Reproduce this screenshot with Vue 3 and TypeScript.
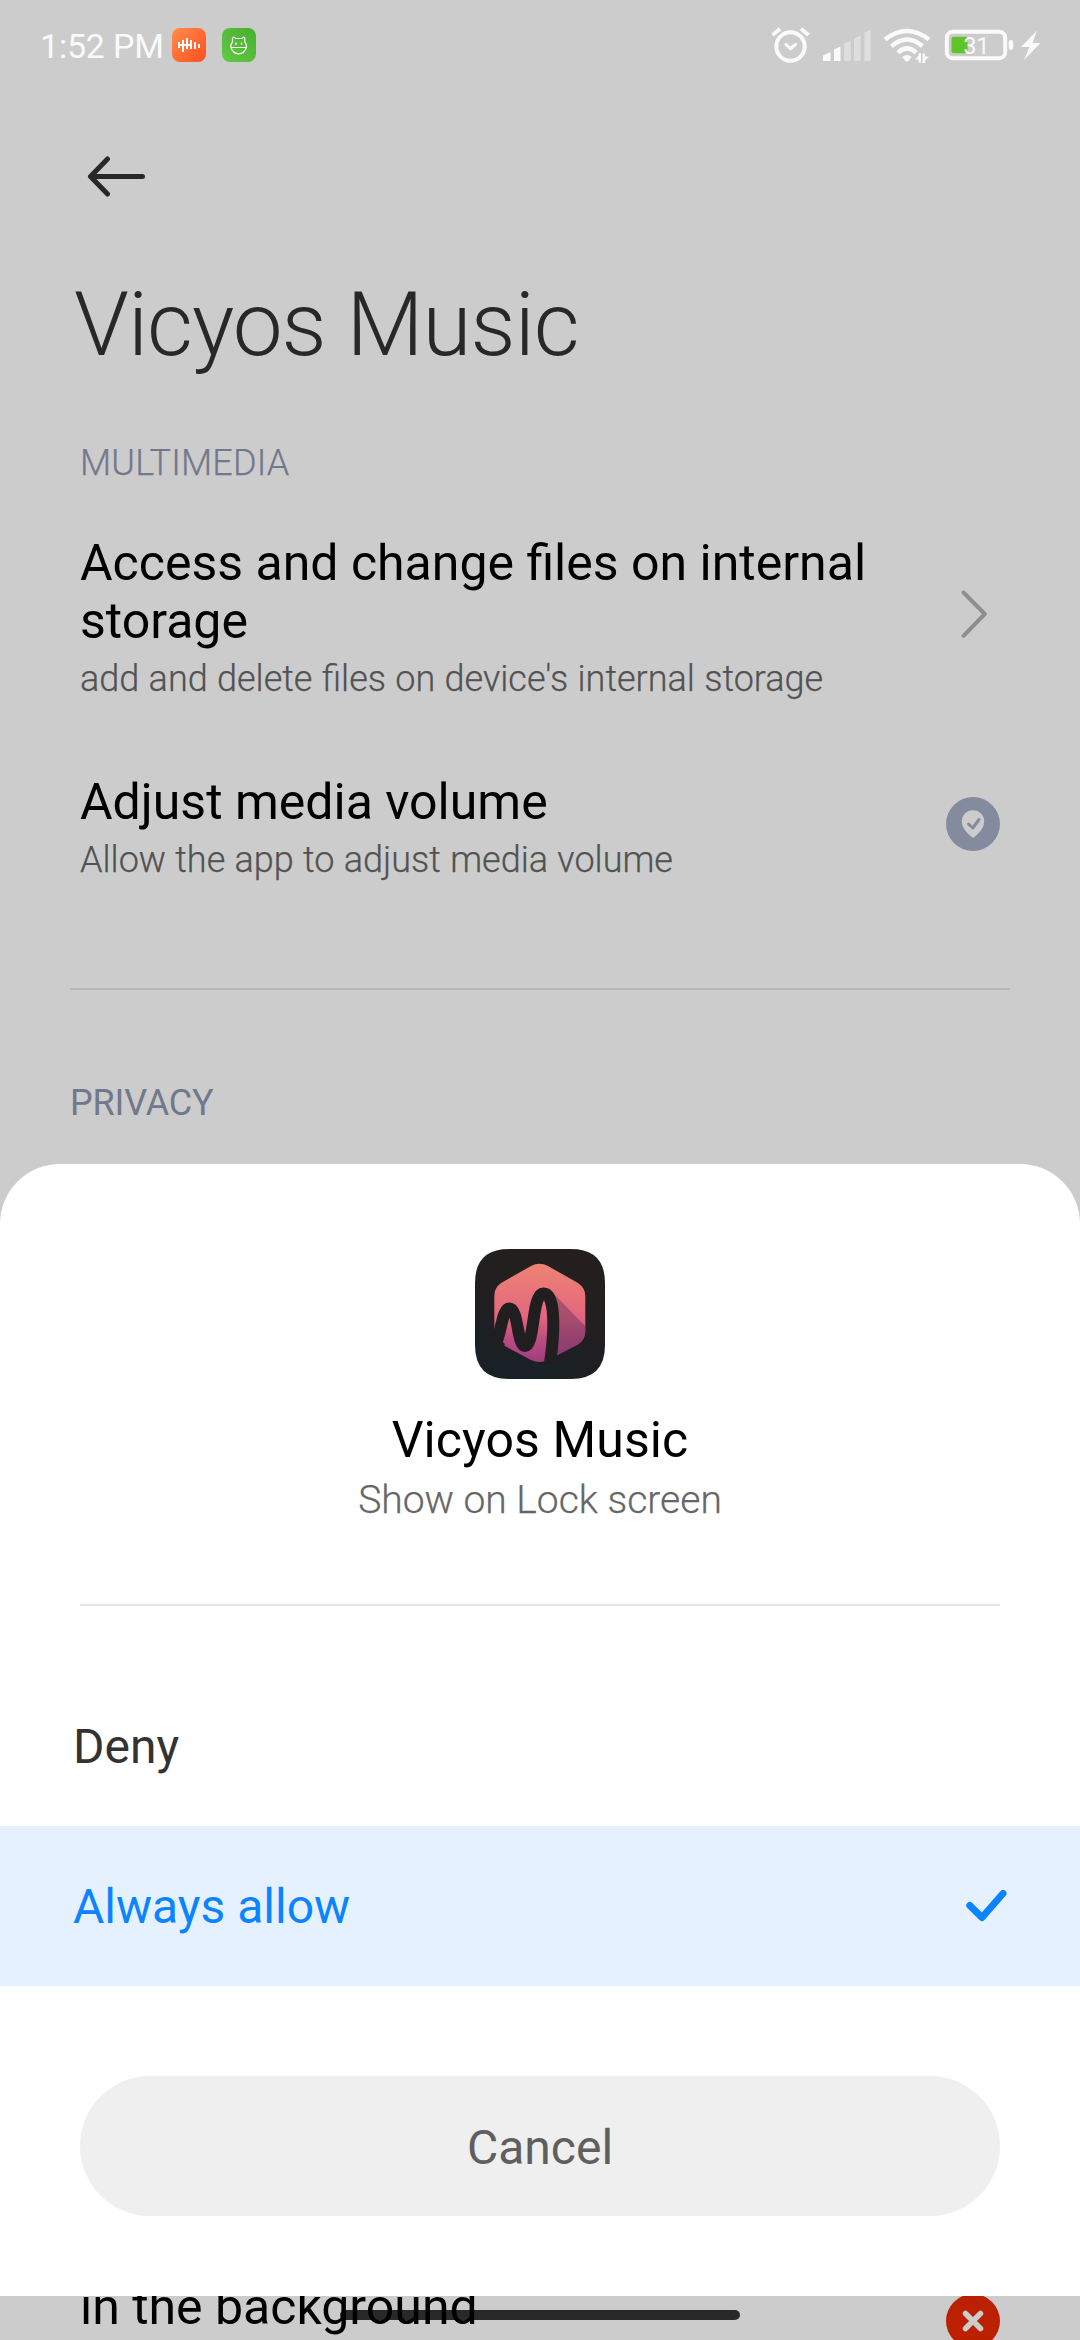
<script setup lang="ts">
interface Option {
  label: string
  selected: boolean
}

const options: Option[] = [
  { label: 'Deny', selected: false },
  { label: 'Always allow', selected: true },
]
</script>

<template>
  <div class="screen">
    <header class="status">
      <span class="time">1:52 PM</span>
      <svg class="app-badge" width="34" height="34" viewBox="0 0 34 34">
        <defs>
          <linearGradient id="orange" x1="0" y1="0" x2="1" y2="1">
            <stop offset="0" stop-color="#ff8d4c" />
            <stop offset="1" stop-color="#ff4e1c" />
          </linearGradient>
        </defs>
        <rect width="34" height="34" rx="8" fill="url(#orange)" />
        <path d="M7 14v6M11 12v12M15 10v11M19 12v9M23 14v7M27 16v4M7 17h12" fill="none" stroke="#fff" stroke-width="2" />
      </svg>
      <svg class="app-badge green" width="34" height="34" viewBox="0 0 34 34">
        <defs>
          <linearGradient id="green" x1="1" y1="0" x2="0" y2="1">
            <stop offset="0" stop-color="#46b02e" />
            <stop offset="1" stop-color="#63c944" />
          </linearGradient>
        </defs>
        <rect width="34" height="34" rx="8" fill="url(#green)" />
        <path d="M10.5 14 10.5 10.5Q11.5 7.500 13.500 10.500H20Q22 7.500 22.800 10.500V14Q24.500 15.500 24.500 19Q22.500 25.800 16.700 25.800Q11 25.800 8.800 19Q8.800 15.500 10.500 14ZM9 19.500H24.500M14 14.500v2.500M19.500 14.500v2.500" fill="none" stroke="#fff" stroke-width="1.200" />
      </svg>

      <svg class="status-icons" width="272" height="40" viewBox="769 25 272 40">
        <g fill="none" stroke="#fafafa" stroke-linecap="round" stroke-linejoin="round">
          <circle cx="790.5" cy="46.500" r="14.200" stroke-width="4" />
          <path d="m786 44.500 4.500 4.200 5-4.200" stroke-width="3.200" />
          <path d="m772.500 35 7.500-6.300M808.500 35l-7.500-6.300" stroke-width="3.800" stroke-linecap="butt" />
        </g>
        <g fill="#fafafa">
          <path d="M823 61V56.500q0-1 1-1.400L830.500 52V61H824Z" />
          <path d="M834 61V50.500q0-1 1-1.400L840.500 46.500V61H835Z" />
        </g>
        <g fill="#dedede">
          <path d="M844 61V44.500q0-1 1-1.400L850.700 41V61Z" />
          <path d="M854 61V39.500q0-1 1-1.400L860.500 35.500V61Z" />
          <path d="M864.500 61V33.500q0-1 1-1.400L870.700 30V61Z" />
        </g>
        <g fill="none" stroke="#fafafa" stroke-width="4.500">
          <path d="M885 39.500Q907 22.500 929 39.500" />
          <path d="M891.500 46.200Q907 32.800 922.500 46.200" />
          <path d="M897.800 52.700Q907 44 916.200 52.700" />
        </g>
        <path d="M902.300 57q4.700-4 9.400 0l-3.300 4q-1.400 1.300-2.800 0Z" fill="#fafafa" />
        <path d="M919.800 53.200v9.500M923.800 53.500v9.500" fill="none" stroke="#fafafa" stroke-width="2.400" />
        <path d="m915.200 59.500 5.500-6.500v6.500ZM928.800 56.500l-5.500 6.500v-6.500Z" fill="#fafafa" />
        <rect x="946.800" y="31.800" width="58.400" height="26.400" rx="6" fill="none" stroke="#fafafa" stroke-width="4" />
        <rect x="951.500" y="36.800" width="16" height="16.400" rx="2" fill="#60c428" />
        <rect x="1008.700" y="40" width="4.500" height="10" rx="2.200" fill="#fafafa" />
        <text x="963.500" y="53.500" class="battery">31</text>
        <path d="M1037 30.500 1021 47h8.500L1024 60 1040.500 43h-8Z" fill="#fafafa" />
      </svg>
    </header>

    <nav class="toolbar">
      <svg width="60" height="42" viewBox="0 0 60 42" fill="none" stroke="#282828" stroke-width="5" stroke-linecap="round" stroke-linejoin="round">
        <path d="M22.500 3 5.500 20.500 22.500 38M6.500 20.500H57.500" />
      </svg>
    </nav>

    <h1 class="page-title">Vicyos Music</h1>

    <h2 class="section multimedia">MULTIMEDIA</h2>
    <section class="item first">
      <div class="copy">
        <p class="item-title">Access and change files on internal storage</p>
        <p class="item-sub">add and delete files on device's internal storage</p>
      </div>
      <svg class="mark" width="54" height="54" viewBox="0 0 54 54" fill="none" stroke="#8e8e8e" stroke-width="4" stroke-linecap="round" stroke-linejoin="round">
        <path d="M17.500 5.500 38.800 27 17.500 48.800" />
      </svg>
    </section>
    <section class="item second">
      <div class="copy">
        <p class="item-title">Adjust media volume</p>
        <p class="item-sub">Allow the app to adjust media volume</p>
      </div>
      <svg class="mark" width="54" height="54" viewBox="0 0 54 54">
        <circle cx="27" cy="27" r="27" fill="#858b9e" />
        <path d="M27 41Q15.800 32.500 15.800 24.500A11.200 11.200 0 0 1 38.200 24.500Q38.200 32.500 27 41Z" fill="#ccc" />
        <path d="m22.500 27 4.300 4L33 22.500" fill="none" stroke="#858b9e" stroke-width="3" stroke-linecap="round" stroke-linejoin="round" />
      </svg>
    </section>
    <hr class="rule" />
    <h2 class="section privacy">PRIVACY</h2>

    <section class="item background">
      <p class="item-title">in the background</p>
      <svg class="denied" width="54" height="54" viewBox="0 0 54 54">
        <circle cx="27" cy="27" r="27" fill="#bb2000" />
        <path d="m19.500 19.500 15 15M34.500 19.500l-15 15" stroke="#ccc" stroke-width="5.500" stroke-linecap="round" />
      </svg>
    </section>

    <div class="sheet">
      <svg class="app-icon" width="130" height="130" viewBox="0 0 130 130">
        <defs>
          <linearGradient id="tile" x1="0.700" y1="0" x2="0.300" y2="1">
            <stop offset="0" stop-color="#241f1e" />
            <stop offset="0.500" stop-color="#211f20" />
            <stop offset="1" stop-color="#182126" />
          </linearGradient>
          <linearGradient id="hex" x1="0" y1="0" x2="0" y2="1">
            <stop offset="0" stop-color="#ee8572" />
            <stop offset="0.550" stop-color="#e3657f" />
            <stop offset="0.750" stop-color="#bb4c80" />
            <stop offset="1" stop-color="#9d3c80" />
          </linearGradient>
          <clipPath id="hexclip">
            <path d="M56 17Q64.500 12.500 73 17L103 34Q110.300 39 110.300 47V82Q110.300 91 103 95.500L73 111Q64.500 115 56 111L26 95Q19.300 91 19.300 82V47Q19.300 39 26 34Z" />
          </clipPath>
        </defs>
        <path d="M34 0H96Q130 0 130 34V96Q130 130 96 130H34Q0 130 0 96V34Q0 0 34 0Z" fill="url(#tile)" />
        <g clip-path="url(#hexclip)">
          <rect x="18" y="12" width="94" height="104" fill="url(#hex)" />
          <path d="M75 41 112 79V100L80 112Z" fill="#6b3560" fill-opacity="0.500" />
        </g>
        <path d="M20 97C27 82 27 59.500 34.500 59.500C43.500 59.500 42 97 50 97C60 97 56.500 44.500 68.500 44.500C81 44.500 79.500 84 75 114" fill="none" stroke="#211e1f" stroke-width="12" />
        <path d="M18 84 30 95 26 103 17 99Z" fill="#1d2022" />
      </svg>
      <p class="sheet-title">Vicyos Music</p>
      <p class="sheet-sub">Show on Lock screen</p>
      <hr class="sheet-rule" />
      <ul class="options">
        <li v-for="o in options" :key="o.label" :class="['option', { selected: o.selected }]">
          <span>{{ o.label }}</span>
          <svg v-if="o.selected" width="42" height="34" viewBox="0 0 42 34" fill="none" stroke="#0d84ff" stroke-width="7" stroke-linecap="round" stroke-linejoin="round">
            <path d="M4.800 15.500 17 27.500 38 3.500" />
          </svg>
        </li>
      </ul>
      <button class="cancel" type="button">Cancel</button>
    </div>
    <div class="home-handle"></div>
  </div>
</template>

<style>
body {
  margin: 0;
  background: #ccc;
}
</style>

<style scoped>
.screen {
  position: relative;
  box-sizing: border-box;
  width: 1080px;
  height: 2340px;
  overflow: hidden;
  background: #ccc;
  font-family: Roboto, 'Noto Sans', sans-serif;
  font-weight: 400;
  display: flex;
  flex-direction: column;
}
.screen * {
  flex-shrink: 0;
}
h1, h2, p, ul, hr {
  margin: 0;
  padding: 0;
  border: 0;
}
svg {
  display: block;
}
.status {
  display: flex;
  align-items: center;
  height: 90px;
  padding: 0 39px 0 40px;
}
.time {
  width: 132px;
  padding-top: 2px;
  font-size: 34px;
  line-height: 40px;
  letter-spacing: -0.2px;
  color: #fafafa;
  white-space: nowrap;
}
.green {
  margin-left: 16px;
}
.status-icons {
  margin-left: auto;
}
.battery {
  font-size: 23px;
  fill: #fafafa;
}
.toolbar {
  height: 107px;
  padding: 66px 0 0 85px;
  box-sizing: border-box;
}
.page-title {
  margin-top: 76px;
  padding-left: 74px;
  font-size: 89px;
  line-height: 104px;
  font-weight: 300;
  letter-spacing: -0.95px;
  color: #282828;
}
.section {
  font-size: 36px;
  line-height: 42px;
  font-weight: 400;
  color: #72788c;
}
.multimedia {
  margin-top: 65px;
  padding-left: 80px;
  font-weight: 300;
  letter-spacing: 0.18px;
  -webkit-text-stroke: 0.25px currentColor;
}
.item {
  display: flex;
  align-items: center;
  justify-content: space-between;
  padding: 0 80px;
}
.copy {
  width: 800px;
}
.first {
  margin-top: 50px;
}
.second {
  margin-top: 73px;
}
.mark {
  margin-bottom: 6px;
}
.item-title {
  font-size: 50px;
  line-height: 58px;
  color: #000;
}
.item-sub {
  margin-top: 8px;
  font-size: 36px;
  line-height: 42px;
  font-weight: 300;
  /* wide tracking would break the fi ligature, so the words are spread instead */
  word-spacing: 0.5px;
  -webkit-text-stroke: 0.25px currentColor;
  color: #525252;
}
.rule {
  height: 2px;
  margin: 107px 70px 0;
  background: #b7b7b7;
}
.privacy {
  margin-top: 92px;
  padding-left: 70px;
  letter-spacing: -0.15px;
}
.background {
  margin-top: 1154px;
  align-items: flex-start;
}
.denied {
  margin-top: 16px;
}
.sheet {
  position: absolute;
  left: 0;
  top: 1164px;
  width: 1080px;
  height: 1132px;
  box-sizing: border-box;
  padding-top: 85px;
  border-radius: 60px 60px 0 0;
  background: #fff;
  display: flex;
  flex-direction: column;
  align-items: center;
}
.sheet-title {
  margin-top: 32px;
  font-size: 50px;
  line-height: 58px;
  letter-spacing: 0.1px;
  color: #000;
}
.sheet-sub {
  margin-top: 8px;
  font-size: 39px;
  line-height: 46px;
  font-weight: 300;
  -webkit-text-stroke: 0.25px currentColor;
  color: #666;
}
.sheet-rule {
  width: 920px;
  height: 2px;
  margin-top: 81px;
  background: #e6e6e6;
}
.options {
  width: 100%;
  margin-top: 60px;
  list-style: none;
}
.option {
  display: flex;
  align-items: center;
  justify-content: space-between;
  height: 160px;
  box-sizing: border-box;
  padding: 2px 73px 0;
  font-size: 48px;
  line-height: 56px;
  color: #333;
}
.selected {
  background: #e5f1ff;
  color: #0d84ff;
}
.cancel {
  width: 920px;
  height: 140px;
  margin-top: 90px;
  padding: 4px 0 0;
  border: 0;
  border-radius: 70px;
  background: #efefef;
  font: 400 48px/56px Roboto, 'Noto Sans', sans-serif;
  color: #5f5f5f;
}
.home-handle {
  position: absolute;
  left: 340px;
  top: 2310px;
  width: 400px;
  height: 10px;
  border-radius: 5px;
  background: rgba(0, 0, 0, 0.8);
}
</style>
